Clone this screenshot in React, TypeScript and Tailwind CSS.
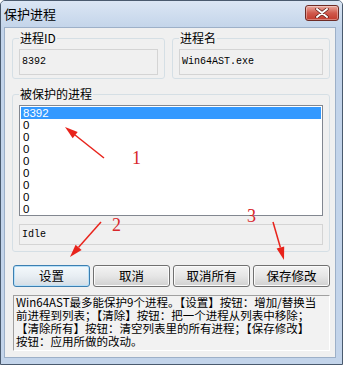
import React from 'react';

const cjk = "font-['Noto_Sans_CJK_SC','Noto_Sans',sans-serif]";
const mono = "font-['Liberation_Mono','Noto_Sans_CJK_SC',monospace]";

const listItems = ['8392', '0', '0', '0', '0', '0', '0', '0', '0'];

const helpLines = [
  'Win64AST最多能保护9个进程。【设置】按钮：增加/替换当',
  '前进程到列表；【清除】按钮：把一个进程从列表中移除；',
  '【清除所有】按钮：清空列表里的所有进程；【保存修改】',
  '按钮：应用所做的改动。',
];

const CloseButton: React.FC = () => (
  <div className="mt-[4px] w-[34px] h-[16px] rounded-[3px] border border-[#6e2b25] bg-gradient-to-b from-[#e9a89f] via-[#d0594c] to-[#c23a2c] flex items-center justify-center shadow-[inset_0_0_0_1px_rgba(255,255,255,0.35)]">
    <svg width="14" height="10" viewBox="0 0 14 10">
      <path d="M2 1 L12 9 M12 1 L2 9" stroke="#5a1d18" strokeWidth="3.4" strokeLinecap="round" />
      <path d="M2 1 L12 9 M12 1 L2 9" stroke="#ffffff" strokeWidth="2" strokeLinecap="round" />
    </svg>
  </div>
);

const Button: React.FC<{ label: string; focused?: boolean }> = ({ label, focused }) => (
  <div
    className={`w-[77px] h-[22px] rounded-[3px] border flex items-center justify-center text-[12.5px] leading-[14px] text-black ${cjk} ${
      focused
        ? 'border-[#3c7fb1] bg-gradient-to-b from-[#f4f9fc] via-[#e8eef3] to-[#d4dde5] shadow-[inset_0_0_0_1px_#b8e0f8]'
        : 'border-[#707070] bg-gradient-to-b from-[#f3f3f3] via-[#e6e6e6] to-[#d0d0d0] shadow-[inset_0_0_0_1px_#fbfbfb]'
    }`}
  >
    {label}
  </div>
);

const ReadOnlyEdit: React.FC<{ value: string; height: string }> = ({ value, height }) => (
  <div
    className={`${height} border border-[#d4d4d4] bg-[#f0f0f0] flex items-center px-[2px] text-[10px] leading-[12px] text-black ${mono}`}
  >
    {value}
  </div>
);

export default function App() {
  return (
    <div className="relative w-[343px] h-[365px] overflow-hidden bg-[#c3d4ea] border border-[#4a5a6e] rounded-t-[5px] flex flex-col">
      {/* Title bar */}
      <div className="h-[26px] flex items-start justify-between pl-[3px] pr-[3px] bg-gradient-to-b from-[#dbe6f4] to-[#c4d5ea]">
        <span className={`mt-[6px] text-[13px] leading-[14px] text-black ${cjk}`}>保护进程</span>
        <CloseButton />
      </div>

      {/* Client area */}
      <div className="flex-1 ml-[3px] mr-[6px] mb-[6px] bg-[#f0f0f0] border border-[#9db0c8] flex flex-col pl-[7px] pr-[5px] pt-[3px]">
        <div className="flex gap-[7px]">
          <fieldset className="w-[153px] border border-[#d5dfe5] rounded-[3px] px-[6px] pb-[3px]">
            <legend className={`px-[1px] text-[12px] leading-[14px] text-black ${cjk}`}>进程ID</legend>
            <div className="mt-[4px]">
              <ReadOnlyEdit value="8392" height="h-[26px]" />
            </div>
          </fieldset>
          <fieldset className="flex-1 border border-[#d5dfe5] rounded-[3px] px-[6px] pb-[3px]">
            <legend className={`px-[1px] text-[12px] leading-[14px] text-black ${cjk}`}>进程名</legend>
            <div className="mt-[4px]">
              <ReadOnlyEdit value="Win64AST.exe" height="h-[26px]" />
            </div>
          </fieldset>
        </div>

        <fieldset className="mt-[8px] border border-[#d5dfe5] rounded-[3px] px-[6px] pb-[6px]">
          <legend className={`px-[1px] text-[12px] leading-[14px] text-black ${cjk}`}>被保护的进程</legend>
          <div className="mt-[4px] h-[111px] border border-[#828790] bg-white p-[1px] flex flex-col">
            {listItems.map((item, i) => (
              <div
                key={i}
                className={`h-[12px] pl-[2px] text-[11.5px] leading-[12px] font-['Liberation_Sans',sans-serif] ${
                  i === 0 ? 'bg-[#3399ff] text-white' : 'text-black'
                }`}
              >
                {item}
              </div>
            ))}
          </div>
          <div className="mt-[8px]">
            <ReadOnlyEdit value="Idle" height="h-[21px]" />
          </div>
        </fieldset>

        <div className="mt-[13px] ml-[1px] flex gap-[3px]">
          <Button label="设置" focused />
          <Button label="取消" />
          <Button label="取消所有" />
          <Button label="保存修改" />
        </div>

        <div
          className={`mt-[8px] ml-[1px] h-[56px] border-t border-l border-t-[#a0a0a0] border-l-[#a0a0a0] border-b border-r border-b-white border-r-white bg-[#f2f2f2] px-[2px] text-[11.5px] leading-[13px] text-black ${cjk}`}
        >
          {helpLines.map((line, i) => (
            <div key={i} className="whitespace-nowrap">
              {line}
            </div>
          ))}
        </div>
      </div>

      {/* Red annotations drawn over the screenshot */}
      <svg className="absolute inset-0 pointer-events-none" width="343" height="365" viewBox="0 0 343 365">
        <g fill="#e8231b" stroke="#e8231b">
          <line x1="103" y1="157" x2="74" y2="134" strokeWidth="1.5" />
          <polygon points="64,126 76.7,131 71.7,137.2" stroke="none" />
          <line x1="100" y1="221" x2="77.6" y2="246.3" strokeWidth="1.5" />
          <polygon points="69,256 80.6,248.9 74.6,243.7" stroke="none" />
          <line x1="272" y1="221" x2="279.4" y2="246.5" strokeWidth="1.5" />
          <polygon points="283,259 283.2,245.4 275.6,247.6" stroke="none" />
        </g>
        <g fill="#d8262b" fontFamily="'Liberation Serif', serif" fontSize="18">
          <text x="131" y="163">1</text>
          <text x="111" y="230">2</text>
          <text x="246" y="221">3</text>
        </g>
      </svg>
    </div>
  );
}
